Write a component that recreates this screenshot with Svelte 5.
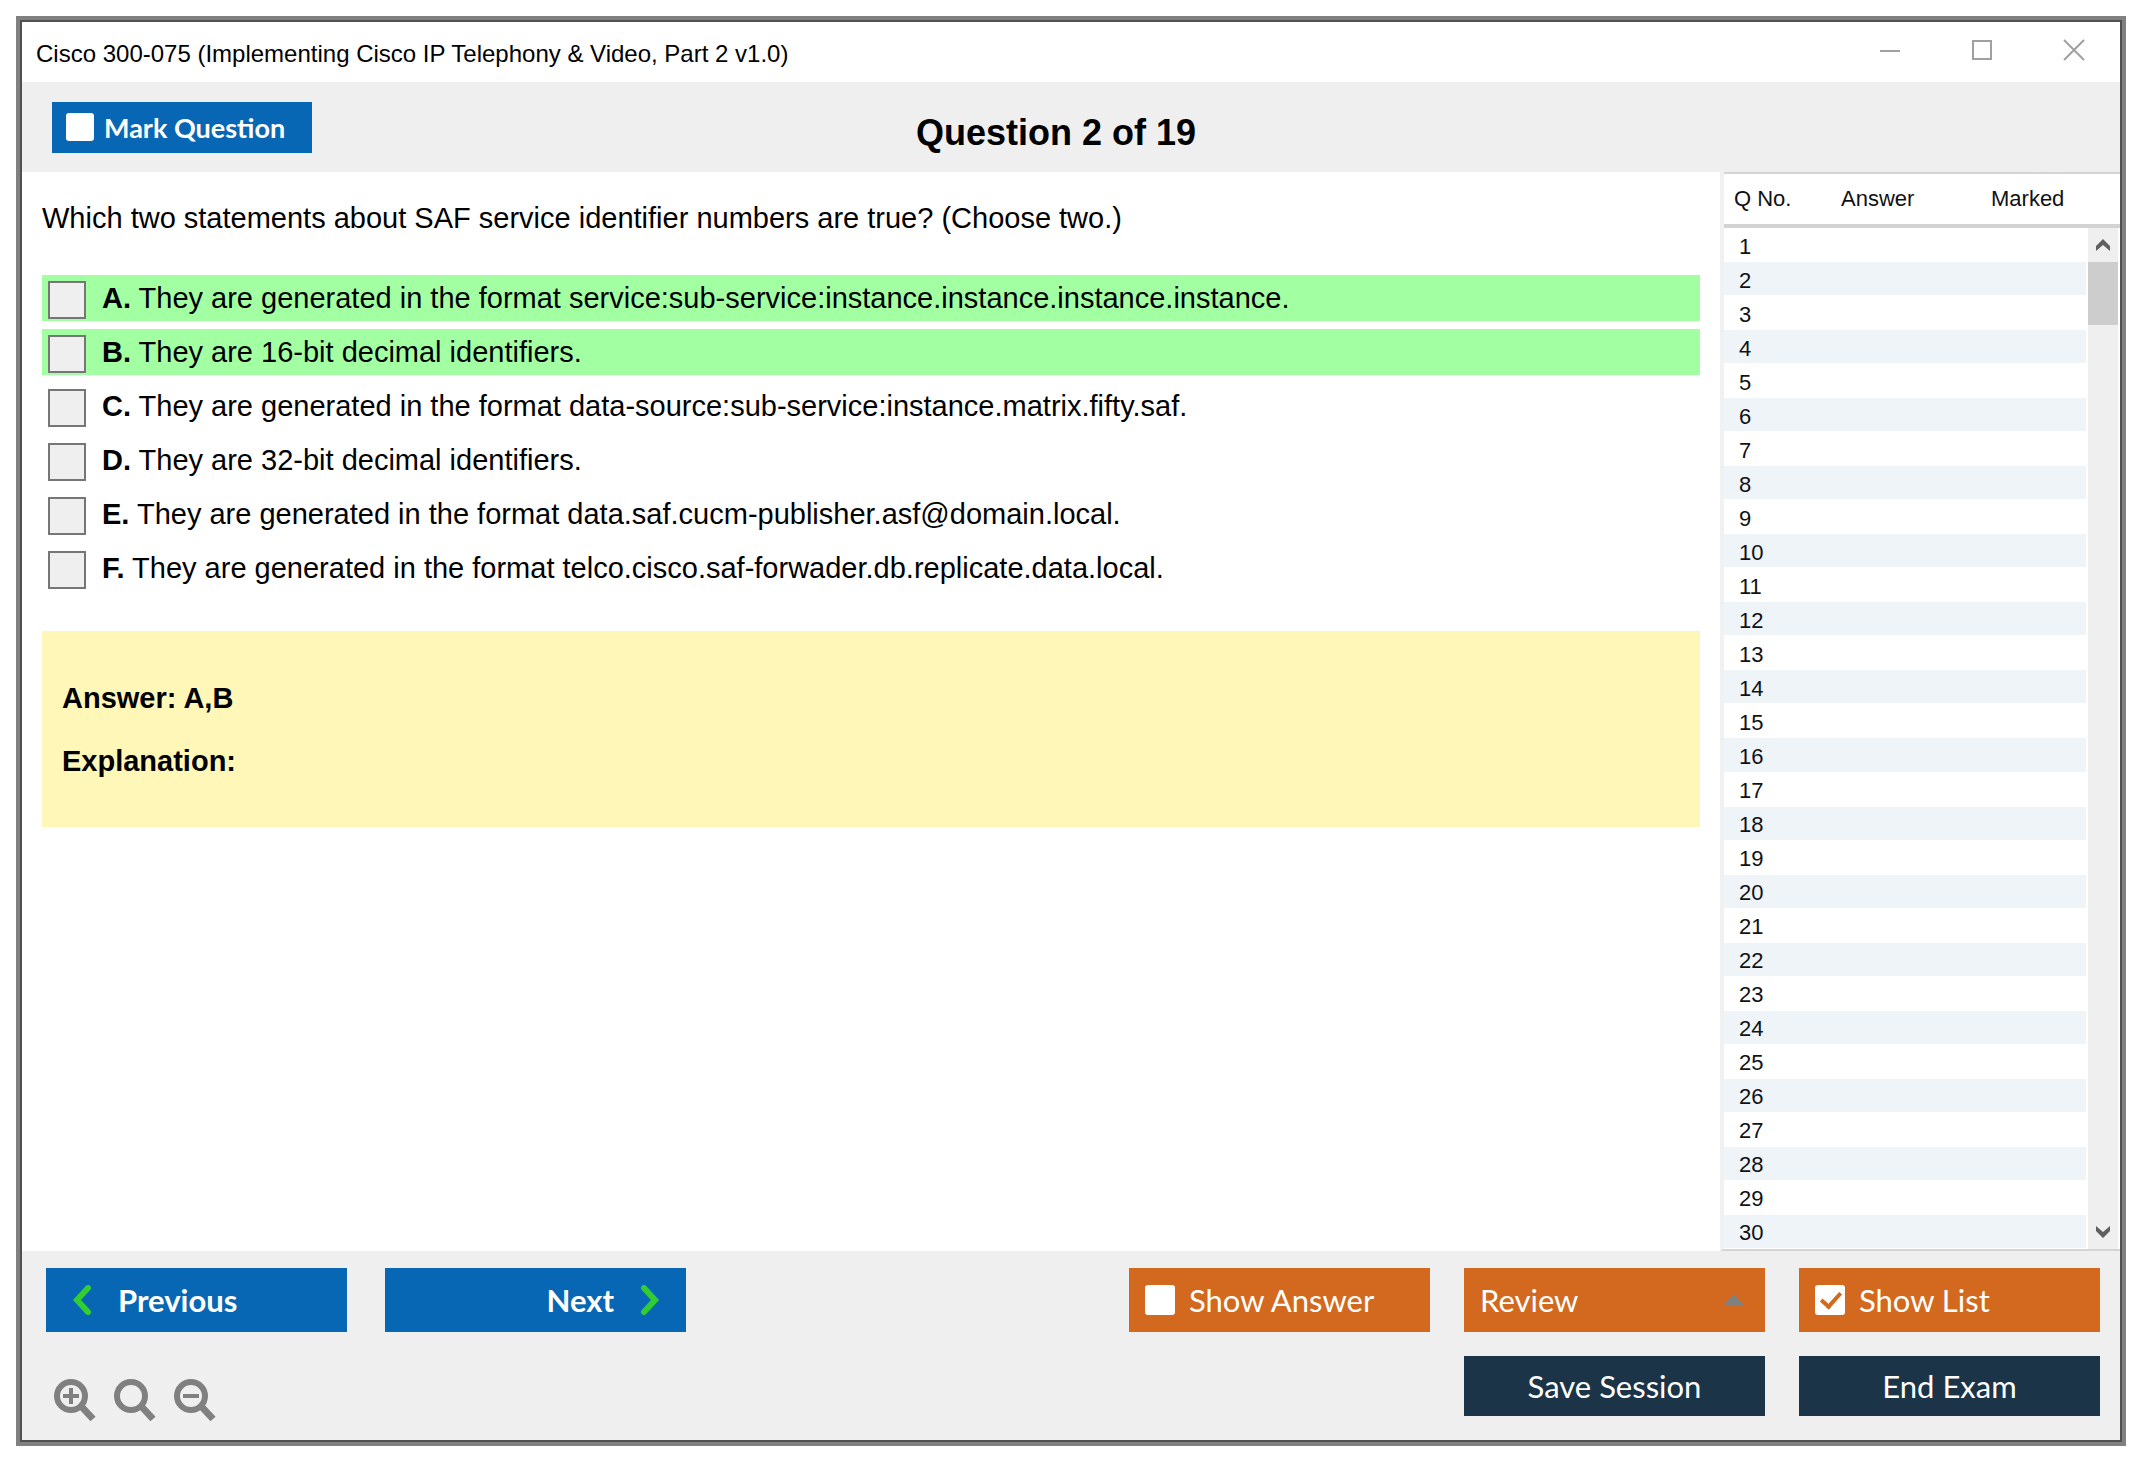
<script>
  let marked = $state(false)
  let showAnswer = $state(false)
  let showList = $state(true)
  let picked = $state([])

  const title = "Cisco 300-075 (Implementing Cisco IP Telephony & Video, Part 2 v1.0)"
  const options = [
    { letter: "A", text: "They are generated in the format service:sub-service:instance.instance.instance.instance.", correct: true },
    { letter: "B", text: "They are 16-bit decimal identifiers.", correct: true },
    { letter: "C", text: "They are generated in the format data-source:sub-service:instance.matrix.fifty.saf." },
    { letter: "D", text: "They are 32-bit decimal identifiers." },
    { letter: "E", text: "They are generated in the format data.saf.cucm-publisher.asf@domain.local." },
    { letter: "F", text: "They are generated in the format telco.cisco.saf-forwader.db.replicate.data.local." },
  ]
  const rows = Array.from({ length: 30 }, (_, i) => i + 1)
</script>

<div class="page">
  <div class="window">
    <header class="titlebar">
      <span class="title">{title}</span>
      <div class="window-buttons">
        <button aria-label="Minimize">
          <svg width="22" height="22" viewBox="0 0 22 22"><path d="M1 12h20" /></svg>
        </button>
        <button aria-label="Maximize">
          <svg width="22" height="22" viewBox="0 0 22 22"><path d="M2 2h18v18H2z" /></svg>
        </button>
        <button aria-label="Close">
          <svg width="22" height="22" viewBox="0 0 22 22"><path d="M1 1l20 20M21 1L1 21" /></svg>
        </button>
      </div>
    </header>

    <div class="toolbar">
      <label class="mark">
        <input type="checkbox" class="box" bind:checked={marked} />
        Mark Question
      </label>
      <h1>Question 2 of 19</h1>
    </div>

    <div class="body">
      <main>
        <p class="question">Which two statements about SAF service identifier numbers are true? (Choose two.)</p>
        <div class="options">
          {#each options as o}
            <label class="option" class:correct={o.correct}>
              <input type="checkbox" value={o.letter} bind:group={picked} />
              <span><b>{o.letter}.</b> {o.text}</span>
            </label>
          {/each}
        </div>
        <section class="explanation">
          <p>Answer: A,B</p>
          <p>Explanation:</p>
        </section>
      </main>

      {#if showList}
        <aside>
          <table>
            <thead>
              <tr>
                <th class="no">Q No.</th>
                <th class="answer">Answer</th>
                <th>Marked</th>
              </tr>
            </thead>
            <tbody>
              {#each rows as n}
                <tr>
                  <td>{n}</td>
                  <td></td>
                  <td></td>
                </tr>
              {/each}
            </tbody>
          </table>
          <div class="scroll">
            <div class="corner"></div>
            <div class="track">
              <button aria-label="Scroll up">
                <svg width="16" height="14" viewBox="0 0 16 14"><path d="M1 8l7-7 7 7v5L8 7l-7 6z" /></svg>
              </button>
              <div class="thumb"></div>
              <button class="down" aria-label="Scroll down">
                <svg width="16" height="14" viewBox="0 0 16 14"><path d="M1 6l7 7 7-7V1L8 7 1 1z" /></svg>
              </button>
            </div>
          </div>
        </aside>
      {/if}
    </div>

    <footer>
      <div>
        <div class="nav">
          <button class="btn blue">
            <svg width="20" height="30" viewBox="0 0 20 30"><path d="M16 3L5 15l11 12" /></svg>
            Previous
          </button>
          <button class="btn blue next">
            Next
            <svg width="20" height="30" viewBox="0 0 20 30"><path d="M4 3l11 12L4 27" /></svg>
          </button>
        </div>
        <div class="zoom">
          <button aria-label="Zoom in">
            <svg width="44" height="44" viewBox="0 0 44 44">
              <circle cx="18" cy="18" r="14" />
              <path class="handle" d="M28 28l12 13" />
              <path class="sign" d="M10 18h16M18 10v16" />
            </svg>
          </button>
          <button aria-label="Reset zoom">
            <svg width="44" height="44" viewBox="0 0 44 44">
              <circle cx="18" cy="18" r="14" />
              <path class="handle" d="M28 28l12 13" />
            </svg>
          </button>
          <button aria-label="Zoom out">
            <svg width="44" height="44" viewBox="0 0 44 44">
              <circle cx="18" cy="18" r="14" />
              <path class="handle" d="M28 28l12 13" />
              <path class="sign" d="M10 18h16" />
            </svg>
          </button>
        </div>
      </div>

      <div class="actions">
        <label class="btn orange">
          <input type="checkbox" class="box" bind:checked={showAnswer} />
          Show Answer
        </label>
        <button class="btn orange review" aria-haspopup="menu">
          Review
          <svg width="22" height="12" viewBox="0 0 22 12"><path d="M0 12L11 0l11 12z" /></svg>
        </button>
        <label class="btn orange">
          <input type="checkbox" class="box" bind:checked={showList} />
          Show List
        </label>
        <button class="btn navy save">Save Session</button>
        <button class="btn navy">End Exam</button>
      </div>
    </footer>
  </div>
</div>

<style>
  :global(body) {
    background: #fff;
  }
  .page {
    box-sizing: border-box;
    min-height: 100vh;
    padding: 16px 24px 24px 16px;
    display: flex;
    font-family: "Liberation Sans", Arial, sans-serif;
    color: #000;
  }
  .window {
    flex: 1;
    min-width: 0;
    display: flex;
    flex-direction: column;
    border: 4px solid #808080;
    outline: 2px solid #505050;
    outline-offset: -6px;
    padding: 2px;
  }
  button {
    border: none;
    background: none;
    padding: 0;
    font: inherit;
    color: inherit;
    cursor: pointer;
  }
  svg {
    display: block;
    fill: none;
  }
  .titlebar {
    height: 60px;
    display: flex;
    justify-content: space-between;
    padding: 0 35px 0 14px;
  }
  .title {
    font-size: 24px;
    line-height: 64px;
  }
  .window-buttons {
    display: flex;
    align-items: center;
    gap: 70px;
    padding-bottom: 4px;
  }
  .window-buttons svg {
    stroke: #a0a0a0;
    stroke-width: 2;
  }
  .toolbar {
    height: 90px;
    display: grid;
    grid-template-columns: 1fr auto 1fr;
    align-items: center;
    padding: 0 60px 0 30px;
    background: #efefef;
  }
  .mark {
    justify-self: start;
    box-sizing: border-box;
    width: 260px;
    height: 51px;
    display: flex;
    align-items: center;
    gap: 10px;
    padding-left: 14px;
    background: #0867b5;
    color: #fff;
    font: bold 27px Lato, sans-serif;
  }
  h1 {
    margin: 0;
    padding-top: 12px;
    font-size: 36px;
  }
  input {
    appearance: none;
    margin: 0;
    flex: none;
    box-sizing: border-box;
  }
  .box {
    width: 30px;
    height: 30px;
    border-radius: 3px;
    background: #fff;
  }
  .mark .box {
    width: 28px;
    height: 28px;
  }
  .box:checked::before {
    content: "";
    display: block;
    width: 8px;
    height: 16px;
    margin: 3px 0 0 10px;
    border: solid #d2691e;
    border-width: 0 4px 4px 0;
    transform: rotate(42deg);
  }
  .body {
    flex: 1;
    display: flex;
    background: #fff;
  }
  main {
    flex: 1;
    min-width: 0;
    padding: 28px 20px;
    font-size: 29px;
    line-height: 36px;
  }
  p {
    margin: 0;
  }
  .options {
    display: grid;
    gap: 8px;
    margin: 39px 0 40px;
  }
  .option {
    display: flex;
    align-items: flex-start;
    gap: 16px;
    padding-left: 6px;
    line-height: 46px;
  }
  .option input {
    width: 38px;
    height: 38px;
    margin-top: 6px;
    border: 2px solid #767676;
    background: #efefef;
  }
  .option input:checked {
    background: #767676;
  }
  .correct {
    background: #a2ffa2;
  }
  .explanation {
    display: grid;
    gap: 27px;
    padding: 49px 20px 48px;
    background: #fff7b8;
    font-weight: bold;
  }
  aside {
    width: 396px;
    display: flex;
    border-left: 4px solid #f1f1f1;
    border-bottom: 2px solid #d4d4d4;
    font-size: 22px;
  }
  table {
    flex: 1;
    border-spacing: 0;
    table-layout: fixed;
    color: #111;
  }
  th {
    box-sizing: border-box;
    height: 56px;
    padding: 0 0 0 10px;
    border-top: 2px solid #d4d4d4;
    border-bottom: 4px solid #d3d3d3;
    text-align: left;
    font-weight: normal;
  }
  .no {
    width: 107px;
  }
  .answer {
    width: 150px;
  }
  td {
    box-sizing: border-box;
    height: 34px;
    padding: 4px 0 0 15px;
    border-bottom: 1px solid #fff;
  }
  tr:nth-child(even) td {
    background: #eff4f9;
    background-clip: padding-box;
  }
  .scroll {
    width: 34px;
    display: flex;
    flex-direction: column;
  }
  .corner {
    height: 50px;
    border-top: 2px solid #d4d4d4;
    border-bottom: 4px solid #d3d3d3;
  }
  .track {
    flex: 1;
    display: flex;
    flex-direction: column;
    margin: 0 2px;
    background: #efefef;
  }
  .track button {
    height: 34px;
    display: grid;
    place-items: center;
  }
  .track svg {
    fill: #606060;
  }
  .thumb {
    height: 63px;
    background: #cdcdcd;
  }
  .track .down {
    margin-top: auto;
  }
  footer {
    display: flex;
    justify-content: space-between;
    padding: 17px 20px 18px 24px;
    background: #efefef;
  }
  .nav {
    display: flex;
    gap: 38px;
  }
  .btn {
    box-sizing: border-box;
    width: 301px;
    height: 64px;
    display: flex;
    align-items: center;
    color: #fff;
    font: 31px Lato, sans-serif;
  }
  .blue {
    gap: 26px;
    padding: 0 26px;
    background: #0867b5;
    font-weight: bold;
  }
  .next {
    justify-content: flex-end;
  }
  .blue svg {
    stroke: #32cd32;
    stroke-width: 6;
    stroke-linecap: round;
  }
  .zoom {
    display: flex;
    gap: 16px;
    margin-top: 46px;
    padding-left: 7px;
  }
  .zoom svg {
    stroke: #808080;
    stroke-width: 6;
  }
  .zoom .handle {
    stroke-width: 7;
  }
  .zoom .sign {
    stroke-width: 4;
  }
  .actions {
    display: grid;
    grid-template-columns: repeat(3, 301px);
    align-content: start;
    column-gap: 34px;
    row-gap: 24px;
  }
  .orange {
    gap: 14px;
    padding: 0 16px;
    background: #d2691e;
  }
  .review {
    justify-content: space-between;
    padding-right: 20px;
  }
  .review svg {
    fill: #808080;
  }
  .navy {
    height: 60px;
    justify-content: center;
    background: #1b3448;
  }
  .save {
    grid-column: 2;
  }
</style>
